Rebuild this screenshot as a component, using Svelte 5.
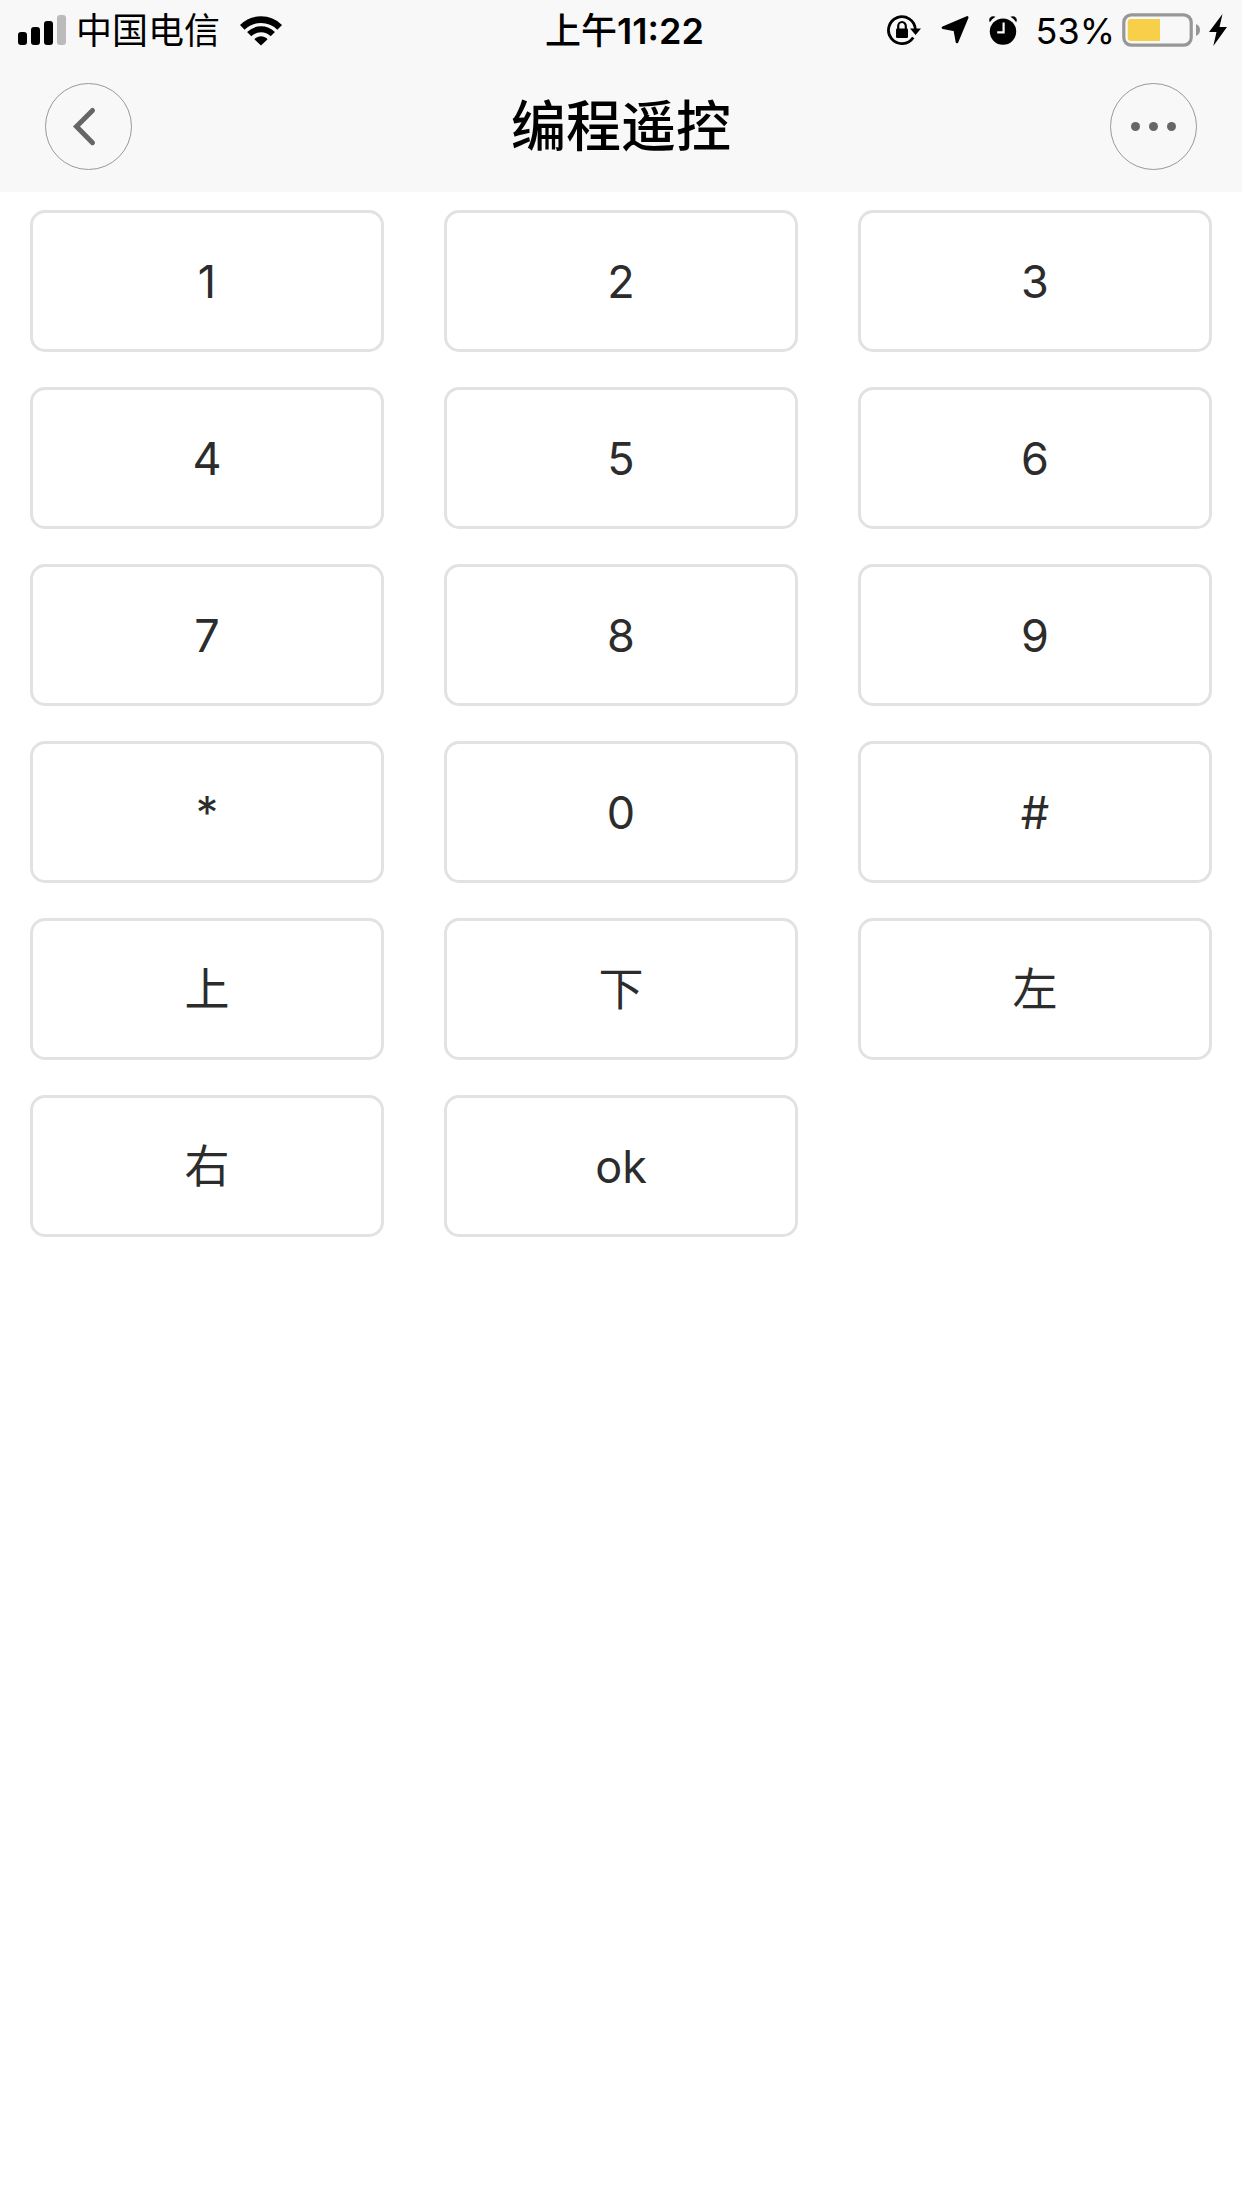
<script>
  import { createEventDispatcher } from 'svelte';

  export let title = '编程遥控';
  export let carrier = '中国电信';
  export let period = '上午';
  export let time = '11:22';
  export let battery = 53;
  export let keys = ['1', '2', '3', '4', '5', '6', '7', '8', '9', '*', '0', '#', '上', '下', '左', '右', 'ok'];

  const dispatch = createEventDispatcher();

  // Inner width of the battery icon is 62 units
  $: batteryFill = Math.round((battery / 100) * 62);

  function isHan(key) {
    return /\p{Script=Han}/u.test(key);
  }

  function press(key) {
    dispatch('press', key);
  }
</script>

<div class="page">
  <header class="top">
    <div class="status">
      <div class="status-left">
        <svg class="signal" width="48" height="30" viewBox="0 0 48 30" aria-hidden="true">
          <rect x="0" y="17" width="9" height="13" rx="3" />
          <rect x="13" y="12" width="9" height="18" rx="3" />
          <rect x="26" y="6" width="9" height="24" rx="3" />
          <rect class="off" x="39" y="0" width="9" height="30" rx="3" />
        </svg>
        <span class="carrier">{carrier}</span>
        <svg class="wifi" width="42" height="31" viewBox="0 0 42 31" aria-hidden="true">
          <path d="M2.3 12.3A26.5 26.5 0 0 1 39.7 12.3" fill="none" stroke="#000" stroke-width="6.6" />
          <path d="M9.2 19.2A16.8 16.8 0 0 1 32.8 19.2" fill="none" stroke="#000" stroke-width="6" />
          <path d="M21 30.6L14.6 24.4Q14.6 23.6 15.6 23A10.4 10.4 0 0 1 26.4 23Q27.4 23.6 27.4 24.4Z" />
        </svg>
      </div>

      <span class="time"><span class="period">{period}</span>{time}</span>

      <div class="status-right">
        <div class="indicators">
          <svg width="34" height="30" viewBox="0 0 34 30" aria-hidden="true">
            <path d="M28.3 14.5A13.4 13.4 0 1 0 26.2 22.4" fill="none" stroke="#000" stroke-width="2.8" />
            <path d="M23 13.4H34L28.6 20Z" />
            <rect x="9" y="13.6" width="12" height="9.4" rx="1.2" />
            <path d="M11.2 14.5V11A3.8 4 0 0 1 18.8 11V14.5" fill="none" stroke="#000" stroke-width="2.2" />
          </svg>
          <svg width="28" height="28" viewBox="0 0 28 28" aria-hidden="true">
            <path d="M26.2 1.4L2 11.8L13.8 14L16 26Z" stroke="#000" stroke-width="2.6" stroke-linejoin="round" />
          </svg>
          <svg width="28" height="30" viewBox="0 0 28 30" aria-hidden="true">
            <circle cx="14" cy="16.6" r="13.2" />
            <path d="M.8 7.2C-1.2 3.6 2.2 -.4 6.6 1.8Q3 3.8 .8 7.2Z" />
            <path d="M27.2 7.2C29.2 3.6 25.8 -.4 21.4 1.8Q25 3.8 27.2 7.2Z" />
            <path d="M14.6 7.4V17.4H8.2" fill="none" stroke="#f8f8f8" stroke-width="2.2" />
          </svg>
        </div>
        <span class="percent">{battery}%</span>
        <svg class="battery" width="78" height="34" viewBox="0 0 78 34" aria-hidden="true">
          <rect x="1.8" y="1.8" width="67.4" height="30.4" rx="7.5" fill="none" stroke="#979797" stroke-width="3.2" />
          <path d="M74 11Q78 12.5 78 17T74 23Z" fill="#979797" />
          <path d="M9 6H{5 + batteryFill}V28H9Q5.7 28 5.7 24.7V9.3Q5.7 6 9 6Z" fill="#f8cf49" />
        </svg>
        <svg class="bolt" width="18" height="32" viewBox="0 0 18 32" aria-hidden="true">
          <path d="M13.5 0L0 18H7.5L4.3 32L18 13H10.5Z" />
        </svg>
      </div>
    </div>

    <nav class="bar">
      <button class="round" aria-label="返回" on:click={() => dispatch('back')}>
        <svg width="85" height="85" viewBox="0 0 85 85" aria-hidden="true">
          <path d="M46.5 26.5L30.5 42.5L46.5 58.7" fill="none" stroke="#666" stroke-width="5" stroke-linecap="round" />
        </svg>
      </button>
      <h1>{title}</h1>
      <button class="round" aria-label="更多" on:click={() => dispatch('more')}>
        <svg width="85" height="85" viewBox="0 0 85 85" fill="#666" aria-hidden="true">
          <circle cx="24.5" cy="42.5" r="4.5" />
          <circle cx="42.5" cy="42.5" r="4.5" />
          <circle cx="60.5" cy="42.5" r="4.5" />
        </svg>
      </button>
    </nav>
  </header>

  <main class="keypad">
    {#each keys as key}
      <button class="key" class:han={isHan(key)} on:click={() => press(key)}>{key}</button>
    {/each}
  </main>
</div>

<style>
  :global(body) {
    background: #fff;
  }

  .page {
    font-family: Inter, 'Noto Sans CJK SC', sans-serif;
    color: #000;
  }

  .top {
    background: #f8f8f8;
  }

  .status {
    display: grid;
    grid-template-columns: 1fr auto 1fr;
    align-items: center;
    height: 60px;
    padding: 0 15px 0 18px;
    font-size: 36px;
    line-height: 54px;
    white-space: nowrap;
  }

  .status-left,
  .status-right,
  .indicators {
    display: flex;
    align-items: center;
    height: 60px;
  }

  .status-right {
    justify-content: flex-end;
  }

  .indicators {
    gap: 20px;
  }

  .signal .off {
    fill: #bbb;
  }

  .carrier,
  .time,
  .percent {
    padding-top: 2px;
  }

  .carrier {
    margin: 0 20px 0 10px;
  }

  .time {
    padding-left: 4px;
    font-weight: 600;
  }

  .period {
    font-weight: 500;
  }

  .percent {
    margin: 0 7px 0 19px;
  }

  .bolt {
    margin-left: 9px;
  }

  .bar {
    display: flex;
    align-items: center;
    justify-content: space-between;
    height: 132px;
    padding: 0 45px;
  }

  h1 {
    margin: 0;
    font-size: 55px;
    font-weight: 500;
    line-height: 80px;
  }

  .round {
    box-sizing: border-box;
    width: 87px;
    height: 87px;
    padding: 0;
    border: 1px solid #999;
    border-radius: 50%;
    background: transparent;
    cursor: pointer;
  }

  .round svg {
    display: block;
  }

  .keypad {
    display: grid;
    grid-template-columns: repeat(3, 1fr);
    gap: 35px 60px;
    padding: 18px 30px;
  }

  .key {
    height: 142px;
    padding: 0;
    border: 3px solid #e2e2e2;
    border-radius: 15px;
    background: #fff;
    color: #2c2c2c;
    font-family: inherit;
    font-size: 45px;
    cursor: pointer;
  }

  /* Han glyphs sit low on the Latin baseline */
  .key.han {
    padding-bottom: 6px;
  }

  .key:active,
  .round:active {
    background: #eee;
  }
</style>
